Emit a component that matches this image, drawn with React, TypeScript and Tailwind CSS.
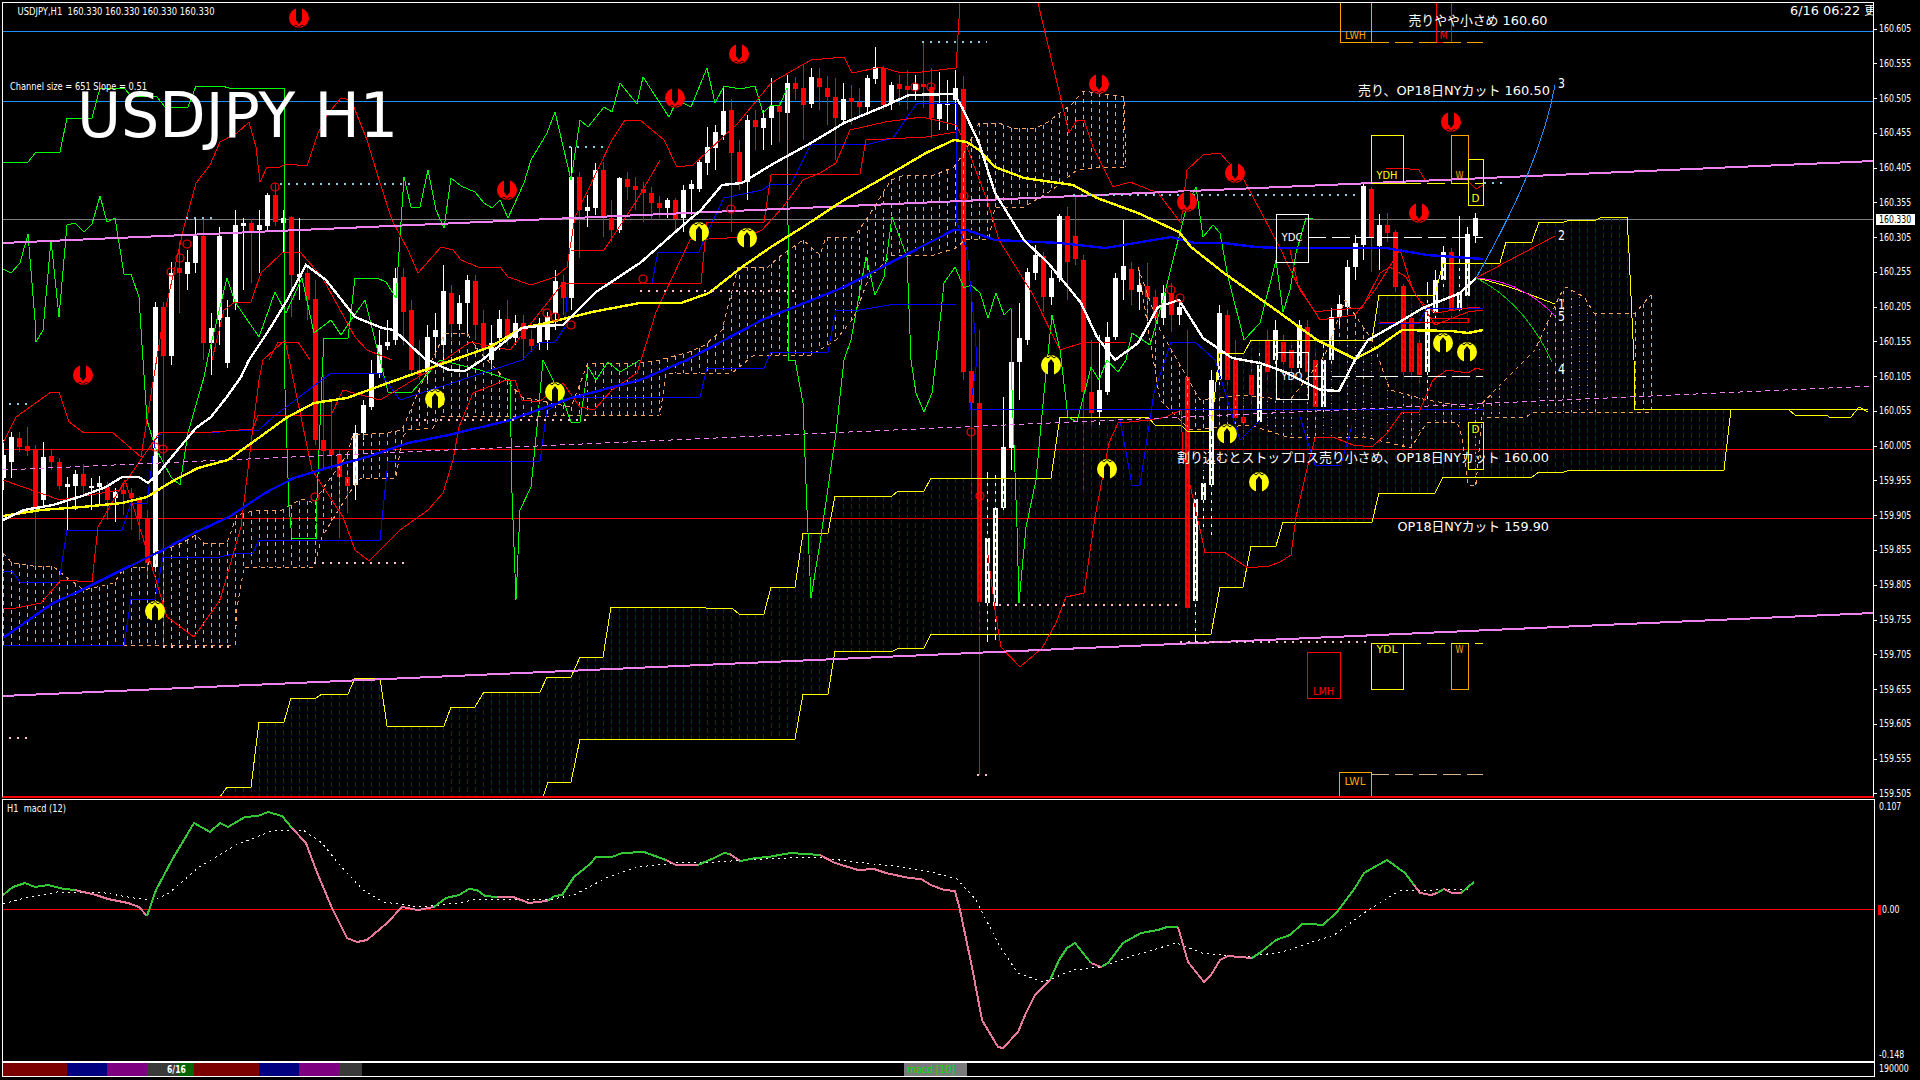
import React from 'react';

type Pt = number[];
// candles: bar index, colour, body top, body bottom, wick high, wick low
type Bar = [number, 'r' | 'w', number, number, number?, number?];

const bars: Bar[] = [
  [0,'w',455,478,440,490],[1,'w',437,462,432,478],[2,'r',438,447,432,452],[3,'r',446,451,427,456],[4,'r',449,507,445,566],[5,'w',457,500,442,505],
  [6,'r',456,462,450,470],[7,'r',462,486,458,490],[8,'w',484,487,477,530],[9,'w',474,486,470,510],[10,'r',474,486,464,495],[11,'w',486,488,478,510],
  [12,'w',483,487,476,505],[13,'r',487,500,482,520],[14,'w',492,498,488,522],[15,'r',490,494,486,515],[16,'r',493,498,488,530],[17,'r',500,518,496,540],
  [18,'r',518,563,510,575],[19,'w',307,567,302,570],[20,'r',307,356,302,647],[21,'w',273,356,262,365],[22,'r',268,273,242,313],[23,'w',262,274,250,290],
  [24,'w',236,263,218,273],[25,'r',236,343,220,360],[26,'w',328,343,313,375],[27,'w',236,320,227,345],[28,'w',317,363,300,368],[29,'w',225,302,210,310],
  [30,'w',223,226,218,290],[31,'r',223,232,219,283],[32,'w',225,230,210,273],[33,'w',195,226,193,230],[34,'r',195,222,183,226],[35,'w',218,223,210,253],
  [36,'r',217,275,216,317],[37,'w',274,277,218,300],[38,'r',273,300,268,320],[39,'r',299,440,280,445],[40,'r',440,451,375,470],[41,'r',449,455,400,470],
  [42,'r',454,477,450,538],[43,'r',477,486,470,513],[44,'w',433,485,425,500],[45,'w',405,433,400,440],[46,'w',373,407,360,410],[47,'w',345,373,330,378],
  [48,'w',342,346,320,350],[49,'w',278,340,268,345],[50,'r',277,312,268,345],[51,'r',310,370,300,375],[52,'r',370,375,340,380],[53,'w',337,372,325,380],
  [54,'w',330,337,313,353],[55,'w',291,345,265,360],[56,'r',293,324,285,340],[57,'w',303,324,295,330],[58,'w',280,303,275,337],[59,'r',281,325,275,340],
  [60,'r',323,349,310,355],[61,'w',343,360,325,370],[62,'w',319,338,310,350],[63,'r',319,337,300,345],[64,'w',323,338,315,345],[65,'r',323,339,315,360],
  [66,'r',339,346,330,352],[67,'w',327,343,318,350],[68,'w',317,340,312,350],[69,'w',281,313,270,330],[70,'r',282,298,275,315],[71,'w',177,298,147,310],
  [72,'r',177,210,172,258],[73,'w',207,211,195,227],[74,'w',170,208,163,215],[75,'r',170,218,162,237],[76,'r',218,230,200,242],[77,'w',178,230,177,233],
  [78,'r',179,187,172,200],[79,'r',186,190,177,210],[80,'r',189,193,182,222],[81,'r',193,203,187,220],[82,'r',203,208,196,218],[83,'w',200,208,198,218],
  [84,'r',200,219,198,232],[85,'w',190,218,185,232],[86,'w',184,189,180,215],[87,'w',162,189,158,192],[88,'w',147,163,127,175],[89,'w',132,148,125,170],
  [90,'w',111,135,88,140],[91,'r',110,153,99,232],[92,'r',152,182,140,190],[93,'w',120,182,115,200],[94,'r',120,127,110,150],[95,'w',118,128,110,150],
  [96,'w',106,118,78,145],[97,'r',106,112,100,142],[98,'w',83,113,75,118],[99,'r',83,89,77,100],[100,'r',88,105,65,140],[101,'w',77,104,68,108],
  [102,'r',78,87,68,110],[103,'r',88,97,76,125],[104,'r',97,118,78,160],[105,'w',99,120,83,125],[106,'r',98,102,85,125],[107,'r',102,107,88,118],
  [108,'w',78,107,75,112],[109,'w',67,79,47,84],[110,'r',68,105,66,110],[111,'w',85,103,82,110],[112,'r',84,89,75,105],[113,'r',86,90,70,110],
  [114,'w',84,90,75,100],[115,'r',84,87,43,108],[116,'r',87,118,68,138],[117,'w',104,119,72,130],[118,'w',103,105,80,130],[119,'w',88,100,70,130],
  [120,'r',89,372,76,380],[121,'r',371,403,300,500],[122,'r',403,602,330,775],[123,'w',538,603,472,642],[124,'w',508,606,475,640],[125,'w',447,508,397,515],
  [126,'w',362,448,320,470],[127,'w',338,362,303,400],[128,'w',272,340,268,345],[129,'w',255,273,245,280],[130,'r',256,297,252,312],[131,'w',278,297,270,305],
  [132,'w',216,278,214,282],[133,'r',216,262,207,300],[134,'r',236,259,195,265],[135,'r',260,392,255,490],[136,'r',392,413,340,430],[137,'w',390,412,335,430],
  [138,'w',337,392,322,395],[139,'w',278,337,273,340],[140,'w',266,280,220,300],[141,'r',269,290,262,305],[142,'w',285,292,270,310],[143,'r',286,297,263,320],
  [144,'r',297,318,290,330],[145,'w',293,318,285,325],[146,'r',293,315,283,332],[147,'w',307,315,300,325],[148,'r',377,608,330,612],[149,'w',499,601,490,643],
  [150,'w',483,500,470,527],[151,'w',380,485,370,535],[152,'w',313,380,305,385],[153,'r',315,380,310,385],[154,'r',360,418,340,425],[155,'r',417,423,400,440],
  [156,'r',375,395,360,410],[157,'w',365,422,350,425],[158,'r',340,372,330,385],[159,'w',330,360,320,370],[160,'r',342,362,335,372],[161,'r',350,368,340,380],
  [162,'w',325,368,320,372],[163,'r',327,372,320,380],[164,'r',360,407,350,412],[165,'w',360,407,345,412],[166,'w',317,360,308,365],[167,'w',304,317,295,325],
  [168,'w',267,307,260,315],[169,'w',243,267,235,280],[170,'w',186,245,184,260],[171,'r',189,238,187,272],[172,'w',225,246,214,270],[173,'r',225,233,213,242],
  [174,'r',232,287,230,292],[175,'r',286,372,284,380],[176,'r',318,372,310,380],[177,'r',343,375,335,385],[178,'w',308,372,282,400],[179,'w',280,313,270,320],
  [180,'w',252,280,246,290],[181,'r',252,310,248,318],[182,'w',292,310,216,315],[183,'w',234,296,227,298],[184,'w',218,236,213,243],
];

// kumo edges in page pixels
const kumoUp: Pt[] = [[220,797],[227,787],[251,787],[259,722],[284,722],[291,698],[316,698],[322,694],[348,694],[355,678],[380,678],[387,726],[444,726],[451,707],[475,707],[484,692],[540,692],[547,677],[571,677],[580,657],[603,657],[611,607],[701,607],[706,608],[732,608],[739,614],[764,614],[771,587],[795,587],[803,533],[828,533],[835,496],[892,496],[898,491],[924,491],[931,478],[1051,478],[1060,417],[1148,417],[1155,425],[1181,425],[1187,431],[1211,431],[1219,353],[1244,353],[1251,340],[1372,340],[1379,295],[1435,295],[1443,263],[1500,263],[1506,242],[1532,242],[1539,222],[1564,222],[1570,220],[1596,220],[1602,217],[1627,217],[1629,253],[1634,360],[1635,409],[1788,409],[1795,415],[1827,415],[1829,417],[1851,417],[1859,407],[1868,412]];
const kumoDown: Pt[] = [[220,797],[543,797],[548,782],[571,782],[580,739],[795,739],[803,694],[828,694],[835,651],[893,651],[899,648],[924,648],[931,634],[1211,634],[1220,587],[1243,587],[1251,546],[1276,546],[1283,522],[1372,522],[1379,493],[1435,493],[1443,477],[1532,477],[1539,472],[1564,472],[1570,470],[1724,470],[1731,409],[1868,409]];
const sandUp: Pt[] = [[3,553],[12,563],[33,566],[53,566],[61,573],[84,590],[114,583],[124,568],[147,567],[153,552],[163,550],[182,543],[196,535],[204,543],[227,543],[237,515],[257,510],[282,510],[294,503],[302,499],[314,503],[324,487],[347,455],[353,435],[386,433],[402,430],[432,360],[445,333],[467,333],[478,350],[522,397],[571,407],[588,363],[640,363],[660,360],[689,352],[705,345],[722,330],[738,267],[768,267],[779,257],[803,240],[820,255],[826,237],[854,237],[868,217],[891,180],[905,175],[934,175],[954,167],[966,150],[979,123],[999,123],[1011,128],[1036,128],[1048,122],[1060,113],[1073,103],[1083,91],[1124,97],[1126,167]];
const sandDown: Pt[] = [[3,645],[235,645],[237,608],[244,567],[314,567],[322,537],[349,493],[361,478],[396,478],[402,438],[408,430],[433,428],[439,417],[660,415],[666,373],[732,373],[754,355],[811,355],[836,340],[854,317],[868,280],[891,255],[934,255],[956,248],[966,239],[989,239],[995,207],[1024,207],[1052,190],[1077,170],[1101,167],[1126,167]];
const sand2Up: Pt[] = [[1138,267],[1160,330],[1200,400],[1240,395],[1290,400],[1325,355],[1345,300],[1372,340],[1390,390],[1427,400],[1457,405],[1476,410],[1500,385],[1535,350],[1560,295],[1566,287],[1584,297],[1594,313],[1635,313],[1651,295]];
const sand2Down: Pt[] = [[1138,267],[1160,400],[1190,430],[1250,425],[1290,438],[1364,437],[1411,448],[1427,422],[1457,422],[1462,437],[1468,485],[1476,485],[1482,417],[1525,418],[1533,412],[1651,412]];

const whiteMa: Pt[] = [[3,520],[24,510],[53,505],[82,496],[106,487],[122,477],[139,477],[148,483],[157,475],[180,447],[196,428],[211,417],[226,398],[241,377],[249,360],[269,330],[286,302],[306,265],[326,280],[355,317],[382,328],[394,330],[424,358],[449,370],[465,371],[482,360],[498,347],[522,328],[539,326],[563,325],[596,292],[640,263],[681,227],[701,210],[722,185],[742,183],[771,165],[811,143],[844,123],[885,106],[909,95],[954,94],[962,107],[979,143],[995,193],[1024,240],[1048,263],[1064,282],[1081,303],[1097,337],[1115,360],[1138,343],[1158,307],[1179,300],[1203,338],[1232,358],[1260,363],[1285,372],[1306,383],[1321,390],[1339,391],[1355,360],[1368,340],[1398,323],[1423,308],[1460,293],[1476,278]];
const yellowMa: Pt[] = [[3,516],[41,510],[82,507],[122,503],[147,497],[171,482],[198,468],[228,460],[253,442],[286,418],[314,403],[347,398],[388,383],[416,373],[453,360],[490,347],[522,328],[551,322],[592,312],[640,303],[681,303],[709,293],[742,267],[771,247],[803,227],[844,200],[885,177],[926,153],[954,140],[967,142],[979,150],[995,167],[1024,178],[1073,185],[1097,198],[1138,213],[1179,232],[1191,247],[1224,273],[1280,313],[1317,340],[1355,359],[1378,347],[1402,330],[1451,331],[1468,333],[1483,330]];
const blueMa: Pt[] = [[3,638],[53,603],[82,590],[122,570],[163,550],[196,532],[229,517],[265,493],[294,478],[327,468],[367,457],[408,443],[449,435],[510,420],[571,398],[640,380],[687,360],[762,320],[844,287],[909,253],[954,230],[967,230],[995,240],[1060,243],[1105,248],[1171,237],[1195,243],[1224,243],[1256,247],[1280,248],[1386,248],[1427,255],[1483,259]];

const greens: Pt[][] = [
  [[3,162],[28,162],[36,152],[60,152],[67,118],[92,118],[100,88],[124,88],[131,96],[157,97],[165,107],[188,107],[196,86],[222,86],[229,88],[284,88],[284,360],[289,507],[292,538],[316,538],[316,523],[322,377],[324,338],[348,338],[355,278],[377,278],[386,282],[396,298],[404,177],[411,207],[420,207],[428,170],[436,210],[444,228],[451,178],[461,186],[475,192],[484,203],[492,208],[500,200],[508,218],[524,183],[531,160],[547,133],[555,112],[571,180],[580,120],[588,127],[604,107],[612,112],[620,83],[637,104],[643,77],[669,117],[677,100],[691,107],[707,68],[715,103],[724,86],[740,89],[755,86],[763,113],[771,105],[780,105],[787,88],[789,360],[795,360],[803,403],[807,510],[811,598],[820,543],[836,433],[844,360],[851,340],[866,257],[875,295],[884,277],[892,217],[907,257],[911,360],[916,393],[924,412],[932,393],[936,360],[944,283],[955,267],[964,288],[971,285],[980,293],[988,318],[996,293],[1004,315],[1011,308],[1012,390],[1017,527],[1019,603],[1026,527],[1036,480],[1044,393],[1052,315],[1060,350],[1068,417],[1077,422],[1091,367],[1099,380],[1107,360],[1118,372],[1126,360],[1132,333],[1150,345],[1163,300],[1187,205],[1196,187],[1203,237],[1213,225],[1220,233],[1228,277],[1244,340],[1260,323],[1276,260],[1283,312],[1290,290],[1296,253],[1306,218],[1313,219]],
  [[3,269],[11,273],[20,263],[28,234],[35,320],[36,342],[43,330],[51,240],[59,317],[67,225],[75,223],[84,232],[92,224],[100,196],[107,222],[115,218],[124,274],[131,274],[139,297],[143,360],[147,420],[155,447],[171,477],[180,485],[188,433],[204,377],[208,357],[227,278],[235,302],[259,337],[275,292],[286,313],[302,278],[314,333],[331,320],[341,335],[349,323],[365,300],[388,392],[412,392],[440,360],[480,370],[510,380],[512,493],[516,600],[520,510],[531,487],[537,427],[543,360],[563,400],[571,422],[580,422],[588,367],[596,380],[608,362],[620,372],[640,360]],
];

const reds: Pt[][] = [
  [[3,443],[16,417],[37,402],[51,392],[59,392],[69,422],[84,433],[112,432],[141,457],[163,320],[184,227],[196,183],[210,165],[220,142],[237,133],[249,122],[256,147],[260,182],[267,167],[278,168],[286,164],[307,166],[318,133],[327,115],[341,98],[351,100],[367,140],[380,183],[392,220],[408,250],[418,273],[441,247],[453,250],[461,260],[478,267],[500,267],[508,277],[531,285],[555,277],[567,267],[575,217],[612,140],[625,120],[640,120],[664,140],[677,167],[693,165],[738,123],[771,83],[795,69],[811,60],[844,57],[852,73],[881,67],[901,73],[922,72],[956,68],[960,3]],
  [[1038,3],[1069,133],[1077,120],[1084,120],[1093,147],[1113,187],[1130,182],[1158,193],[1181,223],[1187,170],[1203,155],[1220,153],[1244,180],[1280,248],[1300,290],[1315,312],[1331,310],[1362,308],[1380,273],[1390,267],[1406,277],[1419,300],[1435,313],[1468,308],[1480,307]],
  [[3,608],[16,608],[41,603],[61,580],[92,582],[98,527],[125,480],[155,577],[167,617],[194,637],[220,600],[241,527],[253,427],[259,380],[263,360],[285,340],[312,470],[343,517],[355,550],[369,561],[388,542],[400,530],[428,510],[443,493],[453,460],[459,427],[473,393],[506,380],[515,380],[522,400],[539,402],[563,383],[580,407],[594,410],[612,390],[637,373],[656,312],[690,240],[746,237],[762,230],[783,207],[803,180],[820,173],[836,163],[850,130],[885,122],[922,117],[956,125],[967,147],[987,200],[999,240],[1032,293],[1060,350],[1085,342],[1126,342]],
  [[640,283],[701,283],[707,222],[764,222],[771,175],[860,174],[866,140],[926,137],[956,132]],
  [[3,480],[60,500],[120,490],[160,432],[212,432],[253,429],[258,415],[331,415],[343,390],[380,400],[430,370],[470,342],[510,350],[563,283],[640,283]],
  [[571,250],[604,250],[637,200],[660,160]],
  [[212,360],[224,310],[235,302],[251,302],[261,273],[282,253],[300,252],[322,277],[355,337],[367,350],[392,360]],
  [[269,360],[278,342],[298,342],[310,360]],
  [[987,547],[995,610],[1001,647],[1020,667],[1042,648],[1056,623],[1066,597],[1084,593],[1095,517],[1109,443],[1118,423],[1150,420],[1166,417],[1181,410],[1183,453],[1203,543],[1205,553],[1224,552],[1248,568],[1269,566],[1280,562],[1291,555],[1296,517],[1306,473],[1315,438],[1333,437],[1353,445],[1372,447],[1387,433],[1402,412],[1419,412],[1433,380],[1447,370],[1468,373],[1476,368],[1483,370]],
  [[1290,250],[1298,285],[1320,320],[1355,315],[1375,290],[1400,250],[1413,290],[1435,325],[1468,312],[1483,310]],
  [[1386,168],[1400,168],[1419,170],[1425,180]],[[1467,180],[1476,189],[1483,185]],
  [[1431,318],[1468,318],[1468,322],[1380,322]],
];

const blues: Pt[][] = [
  [[3,645],[124,645],[131,599],[155,599],[163,557],[220,557],[237,553],[253,553],[259,540],[380,540],[388,461],[540,461],[547,410],[571,397],[700,397],[707,368],[764,368],[771,352],[828,352],[836,310],[860,310],[895,304],[956,304]],
  [[3,571],[12,571],[20,582],[59,582],[67,530],[122,530],[131,503],[147,503],[155,440],[163,432],[220,432],[233,430],[259,430],[273,417],[331,373],[380,373],[400,400],[522,360],[539,343],[555,342],[565,327],[568,283],[652,283],[658,252],[699,252],[705,237],[724,198],[762,190],[771,184],[791,184],[811,144],[869,144],[893,138],[917,103],[956,103],[956,220],[967,250],[975,333],[977,360],[970,409],[1483,409]],
  [[1120,420],[1132,485],[1140,485],[1154,393],[1171,342],[1195,342],[1215,360],[1240,440],[1260,420]],
  [[1300,417],[1315,465],[1341,465],[1352,425]],
  [[1378,323],[1419,323],[1427,308],[1483,308]],
];

const macd: { c: string; p: Pt[] }[] = [
  { c: '#34c934', p: [[3,895],[13,887],[25,883],[35,887],[48,885],[64,889],[75,890]] },
  { c: '#e878a0', p: [[75,890],[96,895],[108,899],[128,903],[139,907],[147,916]] },
  { c: '#34c934', p: [[147,916],[156,890],[172,860],[194,823],[210,832],[220,823],[228,827],[245,817],[258,816],[268,812],[282,816],[292,828]] },
  { c: '#e878a0', p: [[292,828],[306,843],[316,870],[332,908],[347,938],[357,942],[367,940],[387,923],[402,907],[418,910],[434,907]] },
  { c: '#34c934', p: [[434,907],[446,898],[459,895],[469,889],[477,890],[485,896],[497,897]] },
  { c: '#e878a0', p: [[497,897],[513,897],[529,903],[547,901]] },
  { c: '#34c934', p: [[547,901],[555,896],[562,895],[574,877],[590,864],[596,857],[612,857],[622,853],[644,852],[666,860]] },
  { c: '#e878a0', p: [[666,860],[676,865],[698,865]] },
  { c: '#34c934', p: [[698,865],[714,858],[724,853],[730,854]] },
  { c: '#e878a0', p: [[730,854],[740,861]] },
  { c: '#34c934', p: [[740,861],[756,858],[768,857],[791,853],[820,855]] },
  { c: '#e878a0', p: [[820,855],[835,863],[858,870],[874,869],[886,873],[909,878],[921,879],[931,885],[944,890],[955,891],[960,910],[972,967],[982,1020],[998,1047],[1003,1048],[1018,1032],[1026,1013],[1035,995],[1050,980]] },
  { c: '#34c934', p: [[1050,980],[1059,960],[1067,948],[1075,943],[1091,963]] },
  { c: '#e878a0', p: [[1091,963],[1101,967]] },
  { c: '#34c934', p: [[1101,967],[1108,963],[1123,943],[1141,933],[1158,930],[1167,927],[1178,927]] },
  { c: '#e878a0', p: [[1178,927],[1188,962],[1204,982],[1211,975],[1220,960],[1228,956],[1252,958]] },
  { c: '#34c934', p: [[1252,958],[1261,952],[1276,940],[1290,935],[1302,924],[1311,924],[1323,925],[1337,912],[1355,888],[1364,873],[1387,860],[1405,873],[1414,885]] },
  { c: '#e878a0', p: [[1414,885],[1420,893],[1431,895],[1437,893]] },
  { c: '#34c934', p: [[1437,893],[1444,889]] },
  { c: '#e878a0', p: [[1444,889],[1452,893],[1461,893]] },
  { c: '#34c934', p: [[1461,893],[1474,882]] },
];
const signal: Pt[] = [[3,904],[25,898],[57,892],[105,893],[128,897],[153,901],[169,893],[198,868],[236,845],[274,830],[303,830],[322,843],[338,863],[363,890],[383,902],[421,907],[459,903],[478,899],[548,900],[574,895],[606,878],[638,867],[676,863],[714,862],[765,859],[816,857],[855,862],[893,866],[931,872],[957,879],[976,900],[1000,947],[1018,973],[1044,982],[1073,970],[1100,967],[1129,957],[1176,943],[1202,953],[1246,957],[1282,952],[1334,935],[1364,913],[1399,891],[1469,889]];

const downMarks: Pt[] = [[299,18],[507,190],[83,375],[739,54],[675,98],[1099,84],[1235,173],[1187,202],[1451,122],[1419,213]];
const upMarks: Pt[] = [[155,611],[435,399],[555,392],[699,232],[747,238],[1051,365],[1107,469],[1227,434],[1259,482],[1443,343],[1467,352]];
const rings: Pt[] = [[171,272],[180,258],[187,244],[275,187],[547,313],[555,317],[571,325],[155,447],[163,449],[315,497],[643,279],[731,209],[915,87],[931,87],[964,196],[1171,290],[1180,298],[971,432],[980,496]];
const skyDots: number[][] = [[569,604,147],[280,410,184],[186,218,218],[9,27,404],[922,987,42],[1073,1358,195],[1484,1507,183]];
const pinkDots: number[][] = [[314,410,563],[416,592,420],[9,27,738],[163,233,647],[640,795,291],[999,1179,605],[977,987,775],[1180,1368,642]];

const priceTicks = ['160.605','160.555','160.505','160.455','160.405','160.355','160.305','160.255','160.205','160.155','160.105','160.055','160.005','159.955','159.905','159.855','159.805','159.755','159.705','159.655','159.605','159.555','159.505'];

const toPts = (p: Pt[]) => p.map((v) => v.join(',')).join(' ');

const edgeAt = (line: Pt[], x: number) => {
  if (x < line[0][0] || x > line[line.length - 1][0]) return null;
  for (let i = 1; i < line.length; i++) {
    if (x <= line[i][0]) {
      const [x0, y0] = line[i - 1];
      const [x1, y1] = line[i];
      return x1 === x0 ? y1 : y0 + ((y1 - y0) * (x - x0)) / (x1 - x0);
    }
  }
  return null;
};

const Cloud = ({ up, down, color, dash }: { up: Pt[]; down: Pt[]; color: string; dash: string }) => {
  const rows = [];
  for (let i = 0; i < 236; i++) {
    const x = 3 + 8 * i;
    const a = edgeAt(up, x);
    const b = edgeAt(down, x);
    if (a === null || b === null || b - a < 3) continue;
    rows.push(<line key={i} x1={x} x2={x} y1={a} y2={b} stroke={color} strokeDasharray={dash} />);
  }
  return <g shapeRendering="crispEdges">{rows}</g>;
};

// wingdings-like arrow in a disc, pointing down unless flipped
const Mark = ({ x, y, color, flip }: { x: number; y: number; color: string; flip?: boolean }) => (
  <g transform={`translate(${x} ${y}) scale(1 ${flip ? -1 : 1})`}>
    <circle r="10" fill={color} />
    <polygon points="-3,-11 3,-11 3,2 0,6 -3,2" fill="#000" />
    <polyline points="-5,8.5 -3,7 0,9.5 3,7 5,8.5" fill="none" stroke="#000" strokeWidth="1" />
  </g>
);

const Label = ({ x, y, w, size = 12, fill = '#fff', children }: { x: number; y: number; w: number; size?: number; fill?: string; children: React.ReactNode }) => (
  <text x={x} y={y} textLength={w} lengthAdjust="spacingAndGlyphs" fontSize={size} fill={fill} dominantBaseline="central">
    {children}
  </text>
);

const Box = ({ x, y, w, h, color, text, ty }: { x: number; y: number; w: number; h: number; color: string; text: string; ty: number }) => (
  <g>
    <rect x={x} y={y} width={w} height={h} fill="none" stroke={color} shapeRendering="crispEdges" />
    <text x={x + w / 2} y={ty} textAnchor="middle" textLength={text.length === 1 ? 8 : 21} lengthAdjust="spacingAndGlyphs" fontSize="11" fill={color} dominantBaseline="central">{text}</text>
  </g>
);

const HDash = ({ a, b, y, color, dash = '18 6' }: { a: number; b: number; y: number; color: string; dash?: string }) => (
  <line x1={a} x2={b} y1={y} y2={y} stroke={color} strokeDasharray={dash} shapeRendering="crispEdges" />
);

const MainChart = () => (
  <svg viewBox="3 3 1871 793" className="block w-[1871px] h-[793px]">
    {/* price lines */}
    <g shapeRendering="crispEdges">
      <line x1="3" x2="1874" y1="31" y2="31" stroke="#1e90ff" />
      <line x1="3" x2="1874" y1="101" y2="101" stroke="#1e90ff" />
      <line x1="3" x2="1874" y1="219" y2="219" stroke="#808080" />
      <line x1="3" x2="1874" y1="449" y2="449" stroke="#ff0000" />
      <line x1="3" x2="1874" y1="518" y2="518" stroke="#ff0000" />
    </g>

    {/* candles */}
    <g shapeRendering="crispEdges">
      {bars.map(([i, c, top, bot, hi, lo]) => {
        const x = 3 + 8 * i;
        const color = c === 'r' ? '#ff0000' : '#ffffff';
        return (
          <g key={i}>
            <line x1={x} x2={x} y1={hi ?? top - 6} y2={lo ?? bot + 6} stroke={color} />
            <rect x={x - 2.5} y={top} width="5" height={bot - top} fill={color} />
          </g>
        );
      })}
    </g>

    <Cloud up={sandUp} down={sandDown} color="#f4a460" dash="4 4" />
    <Cloud up={sand2Up} down={sand2Down} color="#f4a460" dash="4 4" />
    <Cloud up={kumoUp} down={kumoDown} color="#0000ff" dash="5 3" />
    <g shapeRendering="crispEdges" fill="none">
      {[sandUp, sandDown, sand2Up, sand2Down].map((p, i) => (
        <polyline key={i} points={toPts(p)} stroke="#f4a460" strokeDasharray="4 4" />
      ))}
      <polyline points={toPts(kumoUp)} stroke="#ffff00" />
      <polyline points={toPts(kumoDown)} stroke="#ffff00" />

      {greens.map((p, i) => <polyline key={i} points={toPts(p)} stroke="#00ff00" />)}
      {blues.map((p, i) => <polyline key={i} points={toPts(p)} stroke="#0000ff" />)}
      {reds.map((p, i) => <polyline key={i} points={toPts(p)} stroke="#ff0000" />)}

      {/* trend channel */}
      <g stroke="#ee82ee">
        <line x1="3" x2="1874" y1="243" y2="161" strokeWidth="2" />
        <line x1="3" x2="1874" y1="696" y2="613" strokeWidth="2" />
        <line x1="3" x2="1874" y1="470" y2="386" strokeDasharray="5 4" />
      </g>

      <polyline points={toPts(blueMa)} stroke="#0000ff" strokeWidth="2.4" />
      <polyline points={toPts(yellowMa)} stroke="#ffff00" strokeWidth="2.4" />
      <polyline points={toPts(whiteMa)} stroke="#ffffff" strokeWidth="2.4" />

      {/* projection fan */}
      <path d="M1476 278 C1520 200 1545 140 1555 85" stroke="#1e90ff" />
      <path d="M1476 278 L1555 236" stroke="#ff0000" />
      <path d="M1476 278 C1510 285 1530 295 1555 304" stroke="#ffff00" />
      <path d="M1476 278 C1510 280 1535 295 1555 316" stroke="#ff00ff" />
      <path d="M1476 278 C1510 295 1535 325 1552 362" stroke="#00c000" />
    </g>

    {skyDots.map(([a, b, y]) => <line key={a} x1={a} x2={b} y1={y} y2={y} stroke="#87ceeb" strokeWidth="2" strokeDasharray="2 6" shapeRendering="crispEdges" />)}
    {pinkDots.map(([a, b, y]) => <line key={a} x1={a} x2={b} y1={y} y2={y} stroke="#ffc0cb" strokeWidth="2" strokeDasharray="2 6" shapeRendering="crispEdges" />)}

    {rings.map(([x, y]) => <circle key={x} cx={x} cy={y} r="4" fill="none" stroke="#ff0000" strokeWidth="1.2" />)}
    {downMarks.map(([x, y]) => <Mark key={x} x={x} y={y} color="#ff0000" />)}
    {upMarks.map(([x, y]) => <Mark key={x} x={x} y={y} color="#ffff00" flip />)}

    {/* level boxes */}
    <Box x={1340} y={2} w={31} h={40} color="#ffa500" text="LWH" ty={35} />
    <Box x={1436} y={2} w={15} h={40} color="#ff0000" text="M" ty={35} />
    <Box x={1371} y={135} w={32} h={48} color="#ffff00" text="YDH" ty={175} />
    <Box x={1451} y={135} w={17} h={48} color="#ffa500" text="W" ty={175} />
    <Box x={1468} y={159} w={15} h={46} color="#ffff00" text="D" ty={198} />
    <Box x={1276} y={214} w={32} h={48} color="#ffffff" text="YDC" ty={237} />
    <Box x={1276} y={352} w={32} h={47} color="#ffffff" text="YDO" ty={376} />
    <Box x={1468} y={422} w={15} h={47} color="#ffff00" text="D" ty={429} />
    <Box x={1371} y={643} w={32} h={46} color="#ffff00" text="YDL" ty={649} />
    <Box x={1451} y={643} w={17} h={46} color="#ffa500" text="W" ty={649} />
    <Box x={1307} y={652} w={33} h={46} color="#ff0000" text="LMH" ty={691} />
    <Box x={1339} y={772} w={32} h={30} color="#ffa500" text="LWL" ty={781} />
    <HDash a={1371} b={1483} y={42} color="#ffa500" />
    <HDash a={1403} b={1483} y={183} color="#ffff00" />
    <HDash a={1308} b={1483} y={237} color="#ffffff" />
    <HDash a={1308} b={1483} y={376} color="#ffffff" />
    <HDash a={1403} b={1483} y={643} color="#ffff00" />
    <HDash a={1371} b={1483} y={774} color="#d2b48c" />

    <text x="17.5" y="11" textLength="197" lengthAdjust="spacingAndGlyphs" fontSize="10.5" fill="#fff" dominantBaseline="central" xmlSpace="preserve">USDJPY,H1  160.330 160.330 160.330 160.330</text>
    <Label x={10} y={86} w={137} size={11}>Channel size = 651 Slope = 0.51</Label>
    <Label x={77} y={115} w={321} size={62}>USDJPY H1</Label>
    <Label x={1790} y={11} w={100} size={12}>6/16 06:22 更新</Label>
    <Label x={1408.5} y={20.5} w={139} size={13}>売りやや小さめ 160.60</Label>
    <Label x={1358} y={90} w={192} size={13}>売り、OP18日NYカット 160.50</Label>
    <Label x={1177} y={457} w={372} size={13}>割り込むとストップロス売り小さめ、OP18日NYカット 160.00</Label>
    <Label x={1397.5} y={526} w={151.5} size={13}>OP18日NYカット 159.90</Label>
    <Label x={1558} y={83} w={7} size={14}>3</Label>
    <Label x={1558} y={235} w={7} size={14}>2</Label>
    <Label x={1558} y={304} w={7} size={14}>1</Label>
    <Label x={1558} y={316} w={7} size={14}>5</Label>
    <Label x={1558} y={369} w={7} size={14}>4</Label>
  </svg>
);

const MacdChart = () => (
  <svg viewBox="3 800 1871 261" className="block w-[1871px] h-[261px]">
    <line x1="3" x2="1874" y1="909" y2="909" stroke="#ff0000" shapeRendering="crispEdges" />
    <polyline points={toPts(signal)} fill="none" stroke="#ffffff" strokeDasharray="2 4" shapeRendering="crispEdges" />
    {macd.map((s, i) => <polyline key={i} points={toPts(s.p)} fill="none" stroke={s.c} strokeWidth="2" shapeRendering="crispEdges" />)}
    <text x="7" y="808" textLength="59" lengthAdjust="spacingAndGlyphs" fontSize="11" fill="#fff" dominantBaseline="central" xmlSpace="preserve">H1  macd (12)</text>
  </svg>
);

const AxisTick = ({ label }: { label: string }) => (
  <div className="flex items-center h-[12px] gap-[2px]">
    <div className="w-[3px] h-px bg-white" />
    <span className="text-[10px] leading-[12px] scale-x-[0.78] origin-left text-white">{label}</span>
  </div>
);

export default function App() {
  return (
    <div className="w-[1920px] h-[1080px] bg-black overflow-hidden pl-[2px] pt-[2px] font-['DejaVu_Sans','Noto_Sans_CJK_JP',sans-serif]">
      {/* main window */}
      <div className="flex h-[796px]">
        <div className="w-[1873px] h-[796px] border border-b-2 border-white border-b-[#ff0000] overflow-hidden">
          <MainChart />
        </div>
        <div className="relative flex-1 flex flex-col gap-[22.77px] pt-[21px]">
          {priceTicks.map((p) => <AxisTick key={p} label={p} />)}
          <div className="absolute left-[2px] top-[212px] w-[39px] h-[11px] bg-white pl-[3px]">
            <div className="text-black text-[10px] leading-[11px] scale-x-[0.78] origin-left">160.330</div>
          </div>
        </div>
      </div>

      {/* macd window */}
      <div className="flex h-[263px] mt-[1px]">
        <div className="w-[1873px] border border-white overflow-hidden">
          <MacdChart />
        </div>
        <div className="flex-1 text-[10px] leading-[12px] text-white pl-[4px]">
          <div className="pt-[2px] scale-x-[0.78] origin-left">0.107</div>
          <div className="flex items-center mt-[91px] -ml-[1px] gap-[1px]">
            <span className="w-[3px] h-[10px] bg-[#ff0000]" />
            <span className="scale-x-[0.78] origin-left">0.00</span>
          </div>
          <div className="mt-[133px] scale-x-[0.78] origin-left">-0.148</div>
        </div>
      </div>

      {/* period bar */}
      <div className="flex h-[15px]">
        <div className="w-[1873px] border border-white flex items-stretch">
          <div className="w-[64px] bg-[#7c0000]" />
          <div className="w-[40px] bg-[#000080]" />
          <div className="w-[40px] bg-[#7c0080]" />
          <div className="w-[47px] pl-[20px] bg-[linear-gradient(to_right,#3a3a3a_31px,#006400_31px)] text-white text-[11px] leading-[13px] font-bold">
            <div className="scale-x-[0.7] origin-left">6/16</div>
          </div>
          <div className="w-[65px] bg-[#7c0000]" />
          <div className="w-[40px] bg-[#000080]" />
          <div className="w-[40px] bg-[#7c0080]" />
          <div className="w-[23px] bg-[#3a3a3a]" />
          <div className="w-[542px]" />
          <div className="w-[63px] bg-[#7a7a7a] pl-[3px] text-[#00e000] text-[11px] leading-[13px]">
            <div className="scale-x-[0.85] origin-left whitespace-nowrap">macd [10]</div>
          </div>
        </div>
        <div className="flex-1 pl-[4px] text-white text-[10px] leading-[13px]">
          <div className="scale-x-[0.78] origin-left">190000</div>
        </div>
      </div>
    </div>
  );
}
